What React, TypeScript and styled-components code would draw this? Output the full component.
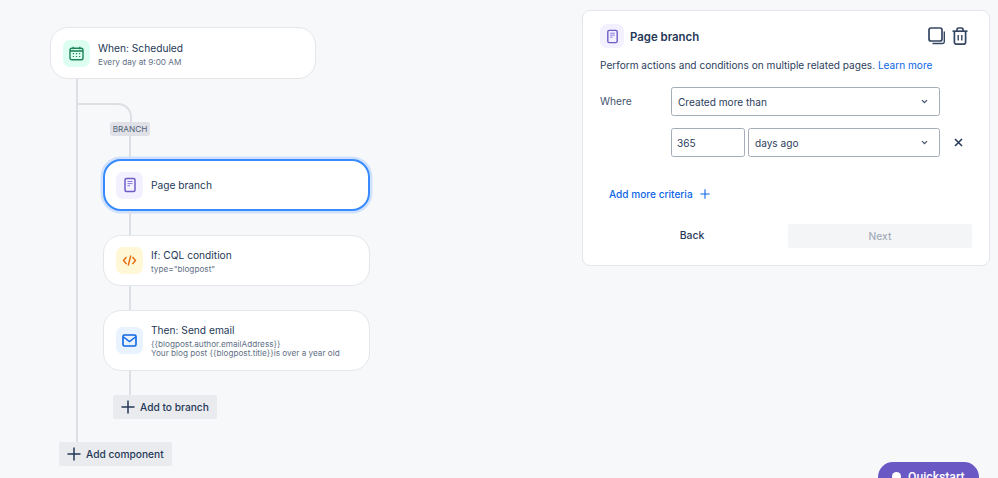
import React from 'react';
import styled, { createGlobalStyle } from 'styled-components';

const GlobalStyle = createGlobalStyle`
  html, body {
    margin: 0;
    padding: 0;
    background: #f7f8f9;
  }
  body {
    font-family: Inter, "Noto Sans", "Liberation Sans", sans-serif;
    color: #253858;
    -webkit-font-smoothing: antialiased;
  }
`;

const Page = styled.div`
  position: relative;
  display: flex;
  justify-content: space-between;
  align-items: flex-start;
  width: 998px;
  height: 478px;
  overflow: hidden;
  padding: 10px 8px 0 50px;
  box-sizing: border-box;
`;

// Left side: the rule flow
const Flow = styled.div`
  display: flex;
  flex-direction: column;
  padding-top: 17px;
`;

const Card = styled.div<{ $height: number; $width?: number; $selected?: boolean }>`
  display: flex;
  align-items: center;
  gap: 8px;
  box-sizing: border-box;
  width: ${(p) => p.$width ?? 267}px;
  height: ${(p) => p.$height}px;
  padding-left: ${(p) => (p.$selected ? 11 : 12)}px;
  background: #fff;
  border-radius: 18px;
  border: ${(p) => (p.$selected ? '2px solid #388bff' : '1px solid #e4e6ea')};
  box-shadow: ${(p) => (p.$selected ? '0 0 0 2.5px #cfe1fd' : 'none')};
`;

const IconTile = styled.div<{ $bg: string; $size?: number }>`
  flex: none;
  display: flex;
  align-items: center;
  justify-content: center;
  width: ${(p) => p.$size ?? 27}px;
  height: ${(p) => p.$size ?? 27}px;
  border-radius: 7px;
  background: ${(p) => p.$bg};
`;

const CardText = styled.div<{ $lift?: boolean }>`
  display: flex;
  flex-direction: column;
  gap: 3px;
  padding-top: ${(p) => (p.$lift ? 0 : 2)}px;
  min-width: 0;
`;

const CardTitle = styled.div`
  font-size: 10.2px;
  line-height: 14px;
  color: #253858;
  white-space: nowrap;
`;

const SoloTitle = styled(CardTitle)`
  margin-top: -1px;
`;

const CardSub = styled.div`
  font-size: 8.2px;
  line-height: 9.5px;
  color: #626f86;
  white-space: nowrap;
`;

const Trunk = styled.div`
  display: flex;
  flex-direction: column;
  align-items: flex-start;
  box-sizing: border-box;
  height: 363px;
  margin-left: 26px;
  padding: 24px 0 0 25px;
  border-left: 2px solid #dcdfe4;
`;

const Elbow = styled.div`
  box-sizing: border-box;
  width: 54px;
  height: 19px;
  margin-left: -25px;
  border-top: 2px solid #dcdfe4;
  border-right: 2px solid #dcdfe4;
  border-top-right-radius: 14px;
`;

const BranchTag = styled.div`
  box-sizing: border-box;
  width: 40px;
  height: 14px;
  margin-left: 7px;
  border-radius: 3px;
  background: #dfe1e6;
  color: #505f79;
  font-size: 8.2px;
  line-height: 14px;
  text-align: center;
`;

const Connector = styled.div<{ $height: number }>`
  width: 2px;
  height: ${(p) => p.$height}px;
  margin-left: 26px;
  background: #dcdfe4;
`;

const AddButton = styled.button<{ $offset: number; $width: number }>`
  display: flex;
  align-items: center;
  gap: 5px;
  box-sizing: border-box;
  width: ${(p) => p.$width}px;
  height: 24px;
  margin-left: ${(p) => p.$offset}px;
  padding: 0 0 0 8px;
  border: none;
  border-radius: 2px;
  background: #e9ebee;
  color: #253858;
  font-family: inherit;
  font-size: 10.2px;
  font-weight: 500;
  white-space: nowrap;
`;

// Right side: the settings panel
const Panel = styled.section`
  box-sizing: border-box;
  width: 408px;
  height: 256px;
  padding: 13px 17px 0;
  background: #fff;
  border: 1px solid #e4e6ea;
  border-radius: 8px;
`;

const PanelHeader = styled.header`
  display: flex;
  align-items: center;
  gap: 6px;
  height: 24px;
`;

const PanelTitle = styled.h2`
  flex: 1;
  margin: 0;
  padding-top: 1px;
  font-size: 11.4px;
  font-weight: 600;
  color: #253858;
`;

const HeaderActions = styled.div`
  display: flex;
  align-items: center;
  gap: 6px;
  margin-right: 4px;
`;

const Description = styled.p`
  margin: 10px 0 0;
  font-size: 10.1px;
  line-height: 14px;
  color: #2c3e5d;
  white-space: nowrap;
`;

const LearnMore = styled.a`
  color: #0c66e4;
`;

const Criteria = styled.div`
  display: grid;
  grid-template-columns: 71px 74px 195px auto;
  row-gap: 12px;
  margin-top: 15px;
  align-items: center;
`;

const WhereLabel = styled.div`
  align-self: start;
  padding-top: 7px;
  font-size: 10.2px;
  line-height: 14px;
  color: #44546f;
`;

const Field = styled.div<{ $span?: number; $gap?: number; $inset?: number }>`
  display: flex;
  align-items: center;
  justify-content: space-between;
  box-sizing: border-box;
  grid-column: span ${(p) => p.$span ?? 1};
  height: 29px;
  margin-left: ${(p) => p.$gap ?? 0}px;
  padding: 0 11px 0 ${(p) => p.$inset ?? 6}px;
  background: #fff;
  border: 1px solid #a6adba;
  border-radius: 2.5px;
  font-size: 10.1px;
  color: #2c3e5d;
`;

const ClearButton = styled.div`
  display: flex;
  padding-left: 14px;
`;

const AddCriteria = styled.div`
  display: flex;
  align-items: center;
  gap: 7px;
  margin: 30px 0 0 9px;
  height: 14px;
  font-size: 10.1px;
  font-weight: 500;
  color: #0c66e4;
`;

const Footer = styled.div`
  display: flex;
  align-items: center;
  margin-top: 22px;
`;

const BackButton = styled.div`
  box-sizing: border-box;
  width: 188px;
  padding: 1px 4px 0 0;
  font-size: 10.4px;
  font-weight: 500;
  line-height: 24px;
  text-align: center;
  color: #253858;
`;

const NextButton = styled.div`
  width: 184px;
  height: 24px;
  border-radius: 2px;
  background: #f4f5f7;
  font-size: 10.2px;
  font-weight: 500;
  line-height: 24px;
  text-align: center;
  color: #a5adba;
`;

const Quickstart = styled.button`
  position: absolute;
  left: 878px;
  top: 462px;
  display: flex;
  align-items: center;
  gap: 7px;
  box-sizing: border-box;
  width: 101px;
  height: 30px;
  padding: 0 0 0 14px;
  border: none;
  border-radius: 15px;
  background: #6a58c4;
  color: #fff;
  font-family: Roboto, sans-serif;
  font-size: 12.2px;
  font-weight: 500;
`;

const Dot = styled.span`
  width: 9px;
  height: 9px;
  margin-top: -2px;
  border-radius: 50%;
  background: #fff;
`;

const PageIcon = ({ size = 16 }: { size?: number }) => (
  <svg width={size} height={size} viewBox="0 0 16 16" fill="none">
    <rect x="3" y="1.5" width="10" height="13" rx="1.5" stroke="#6e5dc6" strokeWidth="1.5" />
    <path d="M5.5 4.5h5M5.5 6.6h5M5.5 8.7h2.5" stroke="#8777d9" strokeWidth="1" />
  </svg>
);

const CalendarIcon = () => (
  <svg width="15" height="15" viewBox="0 0 15 15" fill="none">
    <rect x="1" y="2.2" width="13" height="11.6" rx="1.8" stroke="#1f845a" strokeWidth="1.4" />
    <path d="M1 5h13" stroke="#1f845a" strokeWidth="1.6" />
    <path d="M4.2 0.8v2.4M10.8 0.8v2.4" stroke="#1f845a" strokeWidth="1.3" />
    <path d="M3.8 7.7h1.2M6.9 7.7h1.2M10 7.7h1.2M3.8 10.5h1.2M6.9 10.5h1.2M10 10.5h1.2" stroke="#1f845a" strokeWidth="1.2" />
  </svg>
);

const CodeIcon = () => (
  <svg width="15" height="15" viewBox="0 0 15 15" fill="none" stroke="#e56910" strokeWidth="1.4">
    <path d="M4.5 4 1.5 7.5 4.5 11M10.5 4l3 3.5-3 3.5" />
    <path d="M8.8 2.5 6.2 12.5" />
  </svg>
);

const MailIcon = () => (
  <svg width="15" height="13" viewBox="0 0 15 13" fill="none" stroke="#0c66e4">
    <rect x="1" y="1" width="13" height="11" rx="1.5" strokeWidth="1.6" />
    <path d="M1.5 3 7.5 7.5 13.5 3" strokeWidth="1.4" />
  </svg>
);

const PlusIcon = ({ size = 14, color = '#253858', weight = 1.5 }: { size?: number; color?: string; weight?: number }) => (
  <svg width={size} height={size} viewBox="0 0 14 14" fill="none" stroke={color} strokeWidth={weight}>
    <path d="M7 0.5v13M0.5 7h13" />
  </svg>
);

const Chevron = () => (
  <svg width="7" height="5" viewBox="0 0 8 6" fill="none" stroke="#44546f" strokeWidth="1.5">
    <path d="M1 1.3 4 4.3 7 1.3" />
  </svg>
);

const CloseIcon = () => (
  <svg width="9" height="9" viewBox="0 0 9 9" fill="none" stroke="#253858" strokeWidth="1.5">
    <path d="M1 1l7 7M8 1 1 8" />
  </svg>
);

const CopyIcon = () => (
  <svg width="18" height="18" viewBox="0 0 18 18" fill="none" stroke="#344563">
    <rect x="1" y="1" width="13" height="13" rx="2" strokeWidth="1.7" />
    <path d="M16.3 4.5v10.3a1.7 1.7 0 0 1-1.7 1.7H4.5" strokeWidth="1.4" />
  </svg>
);

const TrashIcon = () => (
  <svg width="16" height="18" viewBox="0 0 16 18" fill="none" stroke="#344563" strokeWidth="1.7">
    <path d="M0.5 4.2h15" />
    <path d="M5 4V2.4A1.4 1.4 0 0 1 6.4 1h3.2A1.4 1.4 0 0 1 11 2.4V4" />
    <path d="M2.4 4.2v11a2 2 0 0 0 2 2h7.2a2 2 0 0 0 2-2v-11" />
    <path d="M6.2 8v5.5M9.8 8v5.5" strokeWidth="1.4" />
  </svg>
);

const App: React.FC = () => (
  <>
    <GlobalStyle />
    <Page>
      <Flow>
        <Card $height={52} $width={266}>
          <IconTile $bg="#dcfff1">
            <CalendarIcon />
          </IconTile>
          <CardText>
            <CardTitle>When: Scheduled</CardTitle>
            <CardSub>Every day at 9:00 AM</CardSub>
          </CardText>
        </Card>
        <Trunk>
          <Elbow />
          <BranchTag>BRANCH</BranchTag>
          <Connector $height={23} />
          <Card $height={52} $selected>
            <IconTile $bg="#f3f0ff">
              <PageIcon />
            </IconTile>
            <SoloTitle>Page branch</SoloTitle>
          </Card>
          <Connector $height={24} />
          <Card $height={51}>
            <IconTile $bg="#fff7d6">
              <CodeIcon />
            </IconTile>
            <CardText>
              <CardTitle>If: CQL condition</CardTitle>
              <CardSub>type="blogpost"</CardSub>
            </CardText>
          </Card>
          <Connector $height={24} />
          <Card $height={61}>
            <IconTile $bg="#e9f2ff">
              <MailIcon />
            </IconTile>
            <CardText $lift>
              <CardTitle>Then: Send email</CardTitle>
              <CardSub>
                {'{{blogpost.author.emailAddress}}'}
                <br />
                {'Your blog post {{blogpost.title}}is over a year old'}
              </CardSub>
            </CardText>
          </Card>
          <Connector $height={24} />
          <AddButton $offset={10} $width={104}>
            <PlusIcon />
            Add to branch
          </AddButton>
        </Trunk>
        <AddButton $offset={9} $width={113}>
          <PlusIcon />
          Add component
        </AddButton>
      </Flow>

      <Panel>
        <PanelHeader>
          <IconTile $bg="#f3f0ff" $size={24}>
            <PageIcon size={15} />
          </IconTile>
          <PanelTitle>Page branch</PanelTitle>
          <HeaderActions>
            <CopyIcon />
            <TrashIcon />
          </HeaderActions>
        </PanelHeader>
        <Description>
          Perform actions and conditions on multiple related pages. <LearnMore>Learn more</LearnMore>
        </Description>
        <Criteria>
          <WhereLabel>Where</WhereLabel>
          <Field $span={2}>
            Created more than
            <Chevron />
          </Field>
          <span />
          <span />
          <Field $inset={5}>365</Field>
          <Field $gap={3}>
            days ago
            <Chevron />
          </Field>
          <ClearButton>
            <CloseIcon />
          </ClearButton>
        </Criteria>
        <AddCriteria>
          Add more criteria
          <PlusIcon size={10} color="#0c66e4" />
        </AddCriteria>
        <Footer>
          <BackButton>Back</BackButton>
          <NextButton>Next</NextButton>
        </Footer>
      </Panel>

      <Quickstart>
        <Dot />
        Quickstart
      </Quickstart>
    </Page>
  </>
);

export default App;
